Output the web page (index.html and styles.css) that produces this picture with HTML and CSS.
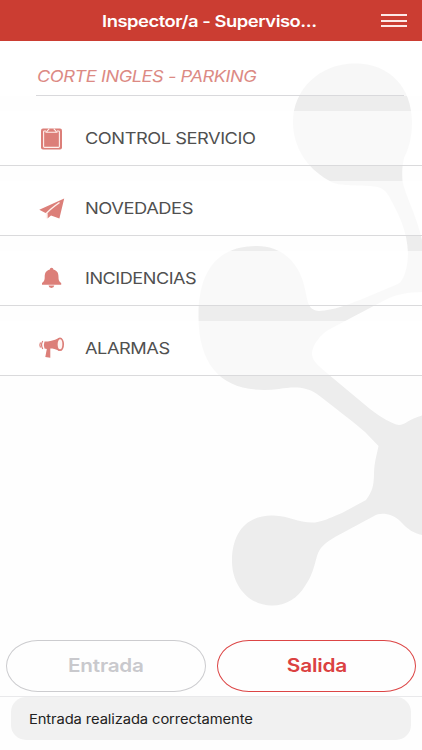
FILE: index.html
```html
<!DOCTYPE html>
<html lang="es">
<head>
<meta charset="utf-8">
<title>Inspector/a</title>
<link rel="stylesheet" href="styles.css">
</head>
<body>
<div class="app">
  <svg class="backdrop" viewBox="0 0 422 750" aria-hidden="true">
    <path d="M355 63.5C390 63.5 412 88 412 122C412 139 408 150 404 158C402 166 402 173 402.500 181C405 195 416 214 422 240V292C407 292 394 295 385 300L330 329C320 334 311 347 312 355C313 362 320 367 328 374L370 409C382 418 392 424 399 425C405 425 409 419 422 415.500V535C414 533 408 530 400 521C392 513 380 512 374 516L335 537C325 543 320 547 317 556C314 567 312 576 305 586C298 598 286 605.500 272 605.500C249 605.500 232 586 232 561C232 533 246 515 273 515.500C291 516 297 523 315 522.500C325 521 334 516 342 513L366 500C372 492 374 486 374 473C374.500 461 377 454 378.500 446L365 432C350 419 335 408 317 394C305 386 293 387 279 389C227 395 198.500 371 198.500 316C198.500 270 218 246 257 246C284 246 299 265 304 285C308 301 307 310 319 311C334 310 347 305 360 300L398 284C404 281 408 267 408 253C407 231 400 217 392 202C386 189 382 187 370 186C345 185 337 186 328 180C307 168 293 147 293 122C293 89 320 63.500 355 63.500Z"/>
  </svg>

  <header class="topbar">
    <h1 class="topbar-title"><span class="wide title-text">Inspector/a - Superviso...</span></h1>
    <button class="menu" aria-label="Menú"><i></i><i></i><i></i></button>
  </header>

  <main class="content">
    <section class="place">
      <h2 class="place-name"><span class="wide place-text">CORTE INGLES - PARKING</span></h2>
    </section>
    <nav class="options">
      <a class="option">
        <svg class="icon" viewBox="0 0 26 26"><path class="fill" d="M4 1.500H21Q23 1.500 23 3.500V20.500Q23 22.500 21 22.500H4Q2 22.500 2 20.500V3.500Q2 1.500 4 1.500Z"/><path class="line" d="M7 4H5.300Q4.600 4 4.600 4.800V19.500Q4.600 20.400 5.500 20.400H19.500Q20.400 20.400 20.400 19.500V4.800Q20.400 4 19.500 4H18M6.500 5.200H18.500M7.300 5L10.300 1.600M14.700 1.600L17.700 5"/></svg>
        <span class="wide label-control">CONTROL SERVICIO</span>
      </a>
      <a class="option">
        <svg class="icon" viewBox="0 0 26 26"><path class="fill" d="M25.200 1.500L.3 12.700L6 15.800L8.500 16.500V21.400L12 18.400L20.400 21.600Z"/><path class="line slash" d="M20.500 5.500Q12 11.500 7.500 16.200V21.500"/></svg>
        <span class="wide label-novedades">NOVEDADES</span>
      </a>
      <a class="option">
        <svg class="icon" viewBox="0 0 26 26"><path class="fill" d="M10.800 2.600Q10.800 .8 12.600 .8T14.400 2.600C18.500 3.700 19.500 6.500 19.500 10C19.500 13.700 20.500 14.600 22.200 16V17.700H3V16C4.800 14.600 5.700 13.700 5.700 10C5.700 6.500 6.700 3.700 10.800 2.600ZM9.500 18.600H15.300Q15 21 12.400 21T9.500 18.600Z"/></svg>
        <span class="wide label-incidencias">INCIDENCIAS</span>
      </a>
      <a class="option">
        <svg class="icon" viewBox="0 0 26 26"><path class="fill" d="M5.500 4.500C10 4.500 14.500 3.500 20 .9V13.700C16.500 12 13 11.400 11.300 11.500L11.300 20.800L6.300 20L7.800 12L5.500 11.600Q4 8.500 5.500 4.500Z"/><ellipse class="horn" cx="21" cy="7.300" rx="3.200" ry="5.900"/><path class="wave" d="M3.800 4Q1.300 7.800 3.800 12M1.500 5.500Q.2 8 1.500 10.500"/></svg>
        <span class="wide label-alarmas">ALARMAS</span>
      </a>
    </nav>
  </main>

  <footer class="footer">
    <div class="actions">
      <button class="pill pill-off"><span class="wide entrada-text">Entrada</span></button>
      <button class="pill pill-on"><span class="wide salida-text">Salida</span></button>
    </div>
    <div class="toast-area">
      <div class="toast"><span class="wide toast-text">Entrada realizada correctamente</span></div>
    </div>
  </footer>
</div>
</body>
</html>
```
FILE: styles.css
```css
* { box-sizing: border-box; }

body {
  margin: 0;
  background: #fefefe;
  font-family: Inter, "Liberation Sans", sans-serif;
}

.app {
  position: relative;
  display: flex;
  flex-direction: column;
  width: 422px;
  height: 750px;
  overflow: hidden;
}

.backdrop {
  position: absolute;
  inset: 0;
  z-index: -1;
  fill: #ededed;
}

h1, h2 { margin: 0; }

button {
  padding: 0;
  background: none;
  border: 0;
  font-family: inherit;
}

/* Extended letterforms: glyphs are widened, height unchanged. */
.wide {
  display: inline-block;
  white-space: nowrap;
  letter-spacing: -.4px;
  transform-origin: left center;
}

.topbar {
  display: flex;
  align-items: center;
  justify-content: space-between;
  flex: none;
  height: 41px;
  padding: 0 15px 0 101.500px;
  background: #cb3d32;
  color: #fff;
}

.topbar-title {
  font-size: 16px;
  font-weight: 600;
  line-height: 20px;
}

.menu {
  display: grid;
  gap: 3.500px;
  width: 26px;
}

.menu i {
  height: 2px;
  background: #fde9e7;
}

.content { flex: 1; }

.place {
  height: 70px;
}

.place-name {
  height: 55px;
  padding: 25px 0 0 36.500px;
  background: linear-gradient(#d9d9dc, #d9d9dc) 36px 100% / 368px 1px no-repeat, rgba(255, 255, 255, .55);
  color: #dc8a84;
  font-size: 16px;
  font-style: italic;
  font-weight: 400;
  line-height: 20px;
}

.options {
  display: grid;
  grid-template-rows: repeat(4, 55px);
  row-gap: 15px;
}

.option {
  display: flex;
  align-items: center;
  gap: 19.500px;
  padding-left: 39px;
  border-bottom: 1px solid #dadadc;
  background: rgba(255, 255, 255, .65);
  color: #505050;
  font-size: 16px;
  line-height: 20px;
}

.icon {
  flex: none;
  width: 26px;
  height: 26px;
  margin-top: 3px;
  overflow: visible;
}

.fill { fill: #dc7f79; }

.line {
  fill: none;
  stroke: #fff1ed;
  stroke-width: 1.100;
}

.slash { stroke-width: 1.500; }

.horn {
  fill: #fff4f2;
  stroke: #dc7f79;
  stroke-width: 1.700;
}

.wave {
  fill: none;
  stroke: #dc7f79;
  stroke-width: 1.200;
}

.footer {
  flex: none;
  height: 110px;
}

.actions {
  display: grid;
  grid-template-columns: 200px 199px;
  column-gap: 11px;
  height: 56px;
  padding-left: 6px;
}

.pill {
  height: 52px;
  border: 1px solid;
  border-radius: 32px / 26px;
  font-size: 18px;
  font-weight: 600;
  line-height: 24px;
}

.pill .wide {
  letter-spacing: -.2px;
  transform-origin: center;
}

.pill-off {
  border-color: #cccccf;
  color: #c9c9cd;
}

.pill-on {
  border-color: #dc4545;
  color: #db4141;
}

.toast-area {
  height: 54px;
  padding: 0 11px;
  border-top: 1px solid #e9e9eb;
}

.toast {
  height: 43px;
  padding: 12px 18px 0 17.500px;
  border-radius: 15px;
  background: #f1f1f1;
  color: #222;
  font-size: 13px;
  line-height: 20px;
}

.toast .wide { letter-spacing: -.1px; }

.title-text { transform: scaleX(1.148); }
.place-text { transform: scaleX(1.137); }
.label-control { transform: scaleX(1.140); }
.label-novedades { transform: scaleX(1.145); }
.label-incidencias { transform: scaleX(1.130); }
.label-alarmas { transform: scaleX(1.138); }
.entrada-text { transform: scaleX(1.150); }
.salida-text { transform: scaleX(1.160); }
.toast-text { transform: scaleX(1.135); }
```
